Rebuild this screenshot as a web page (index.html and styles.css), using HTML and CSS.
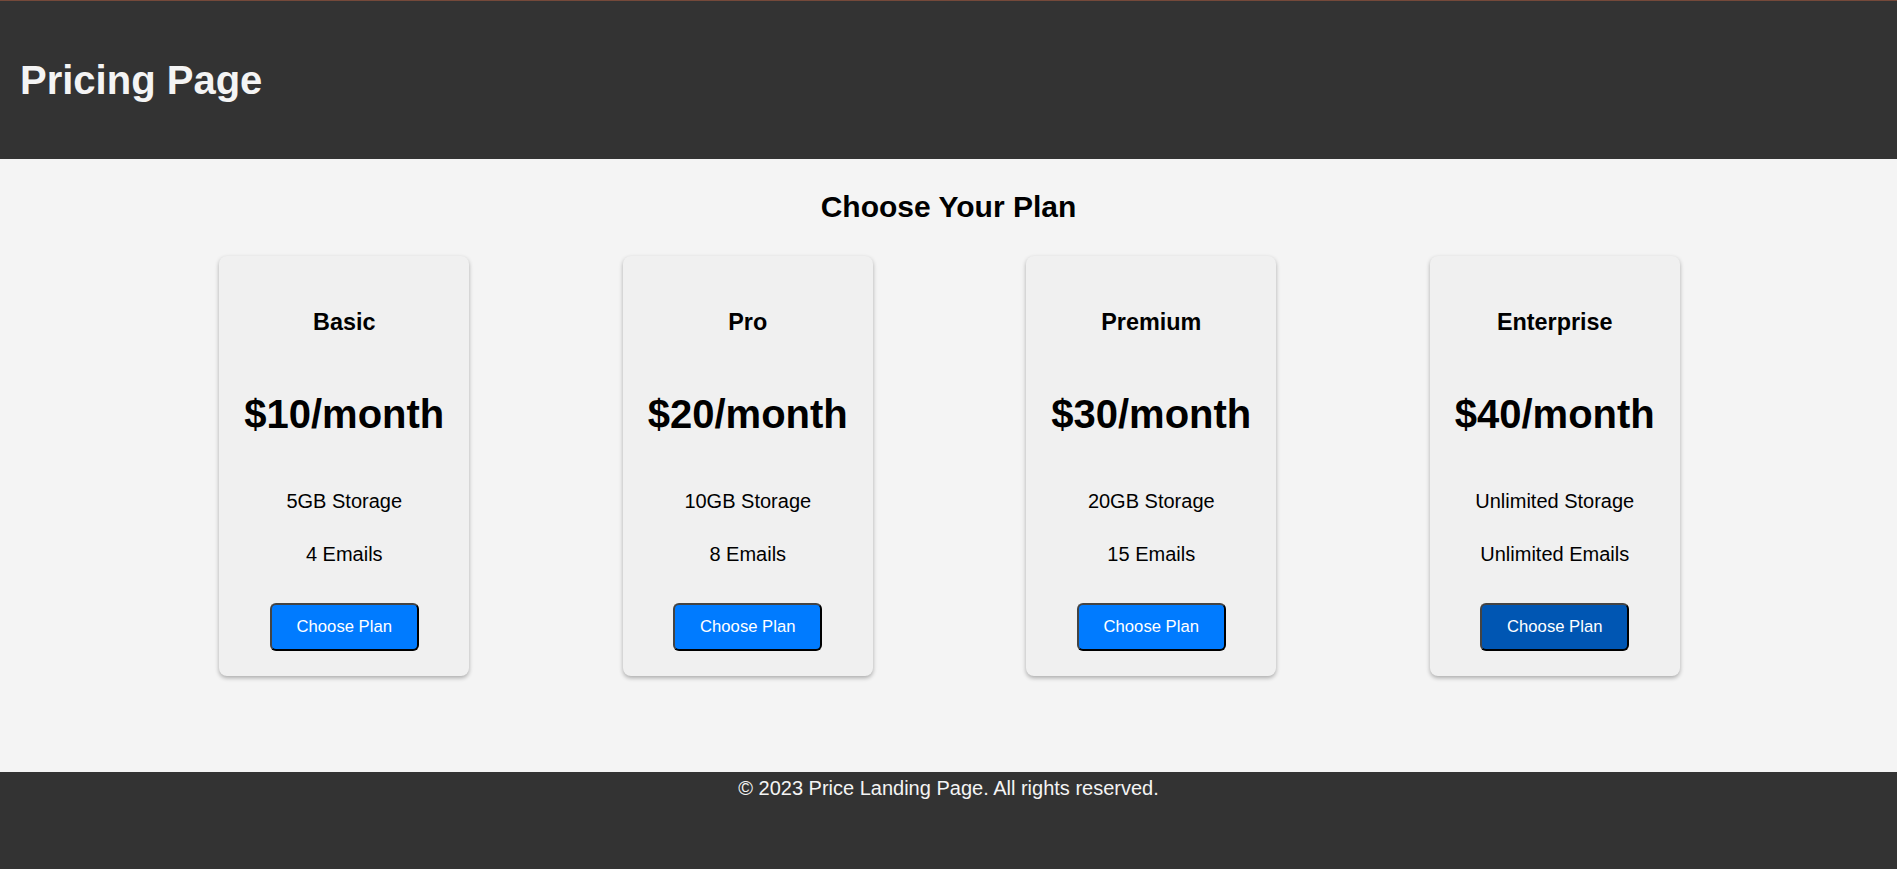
FILE: index.html
```html
<!DOCTYPE html>
<html lang="en">
<head>
<meta charset="utf-8">
<title>Pricing Page</title>
<link rel="stylesheet" href="styles.css">
</head>
<body>
<header class="site-header">
  <h1 class="site-title">Pricing Page</h1>
</header>
<main class="pricing">
  <h2 class="pricing-title">Choose Your Plan</h2>
  <div class="plans">
    <div class="plan">
      <h3 class="plan-name">Basic</h3>
      <p class="plan-price">$10/month</p>
      <p class="plan-feature first">5GB Storage</p>
      <p class="plan-feature">4 Emails</p>
      <button class="plan-btn">Choose Plan</button>
    </div>
    <div class="plan">
      <h3 class="plan-name">Pro</h3>
      <p class="plan-price">$20/month</p>
      <p class="plan-feature first">10GB Storage</p>
      <p class="plan-feature">8 Emails</p>
      <button class="plan-btn">Choose Plan</button>
    </div>
    <div class="plan">
      <h3 class="plan-name">Premium</h3>
      <p class="plan-price">$30/month</p>
      <p class="plan-feature first">20GB Storage</p>
      <p class="plan-feature">15 Emails</p>
      <button class="plan-btn">Choose Plan</button>
    </div>
    <div class="plan">
      <h3 class="plan-name">Enterprise</h3>
      <p class="plan-price">$40/month</p>
      <p class="plan-feature first">Unlimited Storage</p>
      <p class="plan-feature">Unlimited Emails</p>
      <button class="plan-btn active">Choose Plan</button>
    </div>
  </div>
</main>
<footer class="site-footer">
  <p class="copyright">© 2023 Price Landing Page. All rights reserved.</p>
</footer>
</body>
</html>
```

FILE: styles.css
```css
* { box-sizing: border-box; }

html, body {
  margin: 0;
  padding: 0;
}

body {
  font-family: "Liberation Sans", Arial, sans-serif;
  background: #f4f4f4;
  color: #000;
  min-height: 100vh;
  display: flex;
  flex-direction: column;
}

.site-header {
  background: #333;
  border-top: 1px solid #75493a;
  padding: 56px 20px;
}

.site-title {
  margin: 0;
  font-size: 40px;
  line-height: 46px;
  font-weight: bold;
  color: #f4f4f4;
}

.pricing {
  flex: 1;
  padding-top: 30px;
}

.pricing-title {
  margin: 0;
  text-align: center;
  font-size: 30px;
  line-height: 35px;
  font-weight: bold;
}

.plans {
  display: flex;
  justify-content: center;
  gap: 153.5px;
  margin-top: 32px;
  padding-left: 2px;
}

.plan {
  width: 250px;
  background: #f0f0f0;
  border-radius: 8px;
  box-shadow: 0 2px 4px rgba(0, 0, 0, 0.3);
  padding: 25px 20px;
  text-align: center;
  display: flex;
  flex-direction: column;
  align-items: center;
}

.plan-name {
  margin: 28px 0 0;
  font-size: 23.4px;
  line-height: 27px;
  font-weight: bold;
}

.plan-price {
  margin: 55px 0 0;
  font-size: 40px;
  line-height: 46px;
  font-weight: bold;
}

.plan-feature {
  margin: 30px 0 0;
  font-size: 20px;
  line-height: 23px;
}

.plan-feature.first {
  margin-top: 52.5px;
}

.plan-btn {
  margin-top: 37px;
  font-family: "Liberation Sans", Arial, sans-serif;
  font-size: 16.67px;
  line-height: 19px;
  padding: 12.5px 25px;
  color: #fff;
  background: #007bff;
  border: 2px solid #000;
  border-top-color: #444;
  border-left-color: #444;
  border-radius: 6px;
  cursor: pointer;
}

.plan-btn.active {
  background: #0056b3;
}

.site-footer {
  background: #333;
  color: #f4f4f4;
  padding: 5px 0 69px;
  text-align: center;
}

.copyright {
  margin: 0;
  font-size: 20px;
  line-height: 23px;
}
```
